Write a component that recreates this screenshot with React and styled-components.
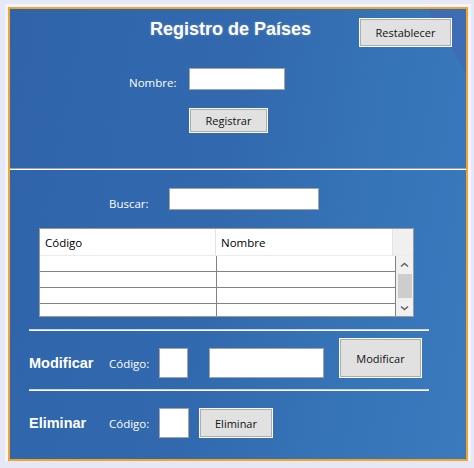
import styled, { createGlobalStyle } from "styled-components";

const GlobalStyle = createGlobalStyle`
  html, body {
    margin: 0;
    padding: 0;
    background: #e7e8f6;
  }
  body {
    font-family: "Open Sans", "Noto Sans", sans-serif;
  }
`;

const Window = styled.main`
  box-sizing: border-box;
  width: 460px;
  height: 454px;
  margin: 7px 0 0 8px;
  border: 2px solid #f4a427;
  box-shadow: 0 0 0 3px #f4f4fc;
  display: flex;
  flex-flow: column nowrap;
  overflow: hidden;
  background:
    linear-gradient(to top right, transparent 49%, rgba(70, 95, 175, 0.4) 51%) right top / 38px 64px no-repeat,
    linear-gradient(100deg, #2f64aa 0%, #3269ae 45%, #3674b8 75%, #3a7abd 100%);
`;

const TopPanel = styled.section`
  height: 159px;
  display: flex;
  flex-flow: column nowrap;
`;

const HeaderRow = styled.div`
  display: flex;
  align-items: flex-start;
  padding: 9px 14px 0 140px;
`;

const Title = styled.h1`
  margin: 1px 0 0;
  font: bold 18px/20px "Liberation Sans", Arial, sans-serif;
  color: #fff;
  text-shadow: 0 0 3px rgba(255, 255, 255, 0.25);
`;

const Button = styled.button`
  box-sizing: border-box;
  width: ${(p) => p.$w}px;
  height: ${(p) => p.$h}px;
  margin-left: ${(p) => (p.$ml === "auto" ? "auto" : `${p.$ml || 0}px`)};
  margin-top: ${(p) => p.$mt || 0}px;
  padding: 0;
  flex: none;
  background: #e1e1e1;
  border: 1px solid #fbfbfb;
  box-shadow: inset 0 0 0 1px #adadad;
  font: 11px "Open Sans", "Noto Sans", sans-serif;
  color: #111;
`;

const FieldRow = styled.div`
  display: flex;
  align-items: flex-start;
  margin-top: ${(p) => p.$mt}px;
  padding-left: ${(p) => p.$pl}px;
`;

const Label = styled.span`
  flex: none;
  width: ${(p) => p.$w}px;
  height: 22px;
  line-height: ${(p) => p.$lh}px;
  font-size: 11.5px;
  color: #fff;
`;

const TextBox = styled.input`
  box-sizing: border-box;
  flex: none;
  width: ${(p) => p.$w}px;
  height: ${(p) => p.$h}px;
  margin: 0 0 0 ${(p) => p.$ml || 0}px;
  padding: 0 3px;
  background: #fff;
  border: 1px solid #a3a3a3;
  outline: none;
`;

const Divider = styled.hr`
  margin: 0;
  height: 0;
  border: none;
  border-top: 1px solid #a0a0a0;
  border-bottom: 1px solid #fff;
`;

const BottomPanel = styled.section`
  flex: 1;
  display: flex;
  flex-flow: column nowrap;
`;

const Grid = styled.div`
  box-sizing: border-box;
  width: 375px;
  height: 89px;
  margin: 18px 0 0 29px;
  border: 1px solid #9a9a9a;
  background: #fff;
  display: flex;
  flex-flow: column nowrap;
  overflow: hidden;
`;

const GridHeader = styled.div`
  display: grid;
  grid-template-columns: 176px 177px 1fr;
  height: 27px;
  flex: none;
`;

const HeaderCell = styled.div`
  display: flex;
  align-items: center;
  padding-left: ${(p) => (p.$filler ? 0 : 5)}px;
  font-size: 11.5px;
  color: #000;
  background: ${(p) => (p.$filler ? "#f0f0f0" : "#fff")};
  border-right: ${(p) => (p.$filler ? "none" : "1px solid #e3e3e3")};
  border-bottom: 1px solid #ececec;
`;

const GridBody = styled.div`
  flex: 1;
  display: flex;
  min-height: 0;
`;

const Rows = styled.div`
  width: 356px;
  flex: none;
  box-sizing: border-box;
  border-right: 1px solid #828282;
  overflow: hidden;
`;

const Row = styled.div`
  box-sizing: border-box;
  height: 16px;
  display: grid;
  grid-template-columns: 177px 1fr;
  border-bottom: 1px solid #828282;
`;

const Cell = styled.div`
  border-right: ${(p) => (p.$last ? "none" : "1px solid #828282")};
`;

const ScrollBar = styled.div`
  flex: 1;
  display: flex;
  flex-flow: column nowrap;
  background: #f0f0f0;
`;

const ScrollArrow = styled.div`
  height: 17px;
  flex: none;
  display: flex;
  align-items: center;
  justify-content: center;
`;

const Track = styled.div`
  flex: 1;
  display: flex;
  flex-flow: column nowrap;
`;

const Thumb = styled.div`
  height: 24px;
  margin: 1px 1px 0 2px;
  background: #cdcdcd;
`;

const Rule = styled.div`
  width: 400px;
  height: 0;
  margin: ${(p) => p.$mt}px 0 0 19px;
  border-top: 1px solid #d2d2d2;
  border-bottom: 1px solid #fafafa;
`;

const ActionRow = styled.div`
  display: flex;
  align-items: flex-end;
  margin-top: ${(p) => p.$mt}px;
  padding-left: 19px;
`;

const SectionTitle = styled.span`
  flex: none;
  width: 80px;
  height: 30px;
  font: bold 14.5px/31px "Liberation Sans", Arial, sans-serif;
  color: #fff;
`;

const InlineLabel = styled.span`
  flex: none;
  width: 50px;
  height: 30px;
  line-height: 31px;
  font-size: 11.5px;
  color: #fff;
`;

const Chevron = ({ down }) => (
  <svg width="9" height="6" viewBox="0 0 9 6">
    <polyline
      points={down ? "1,1.5 4.5,4.5 8,1.5" : "1,4.5 4.5,1.5 8,4.5"}
      fill="none"
      stroke="#606060"
      strokeWidth="1.5"
    />
  </svg>
);

const rows = [0, 1, 2, 3];

export default function App() {
  return (
    <>
      <GlobalStyle />
      <Window>
        <TopPanel>
          <HeaderRow>
            <Title>Registro de Países</Title>
            <Button $w={93} $h={29} $ml="auto">Restablecer</Button>
          </HeaderRow>
          <FieldRow $mt={21} $pl={119}>
            <Label $w={60} $lh={30}>Nombre:</Label>
            <TextBox $w={96} $h={22} />
          </FieldRow>
          <Button $w={79} $h={25} $ml={179} $mt={18}>Registrar</Button>
        </TopPanel>
        <Divider />
        <BottomPanel>
          <FieldRow $mt={18} $pl={99}>
            <Label $w={60} $lh={31}>Buscar:</Label>
            <TextBox $w={150} $h={22} />
          </FieldRow>
          <Grid>
            <GridHeader>
              <HeaderCell>Código</HeaderCell>
              <HeaderCell>Nombre</HeaderCell>
              <HeaderCell $filler />
            </GridHeader>
            <GridBody>
              <Rows>
                {rows.map((r) => (
                  <Row key={r}>
                    <Cell />
                    <Cell $last />
                  </Row>
                ))}
              </Rows>
              <ScrollBar>
                <ScrollArrow><Chevron /></ScrollArrow>
                <Track><Thumb /></Track>
                <ScrollArrow><Chevron down /></ScrollArrow>
              </ScrollBar>
            </GridBody>
          </Grid>
          <Rule $mt={12} />
          <ActionRow $mt={7}>
            <SectionTitle>Modificar</SectionTitle>
            <InlineLabel>Código:</InlineLabel>
            <TextBox $w={29} $h={30} />
            <TextBox $w={115} $h={30} $ml={21} />
            <Button $w={83} $h={40} $ml={15}>Modificar</Button>
          </ActionRow>
          <Rule $mt={11} />
          <ActionRow $mt={17}>
            <SectionTitle>Eliminar</SectionTitle>
            <InlineLabel>Código:</InlineLabel>
            <TextBox $w={30} $h={30} />
            <Button $w={74} $h={30} $ml={10}>Eliminar</Button>
          </ActionRow>
        </BottomPanel>
      </Window>
    </>
  );
}
